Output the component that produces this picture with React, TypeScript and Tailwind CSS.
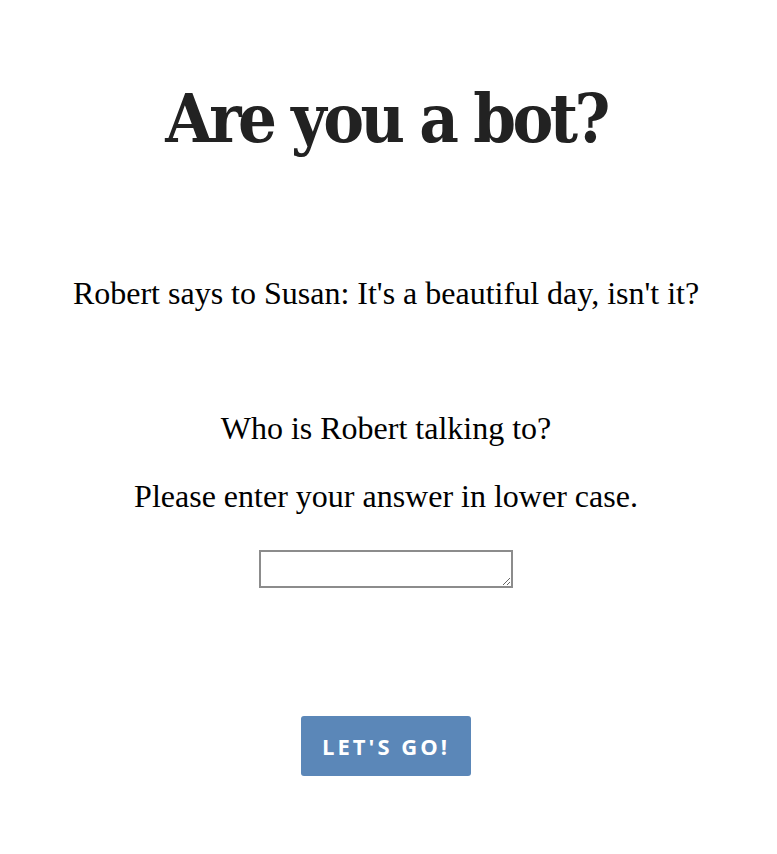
export default function App() {
  return (
    <div className="min-h-[854px] w-full bg-white flex flex-col items-center text-black pr-[5px]" style={{ fontFamily: '"Liberation Serif", serif' }}>
      <h1 className="mt-[76px] text-[68px] leading-[84px] font-bold text-[#222] tracking-[-3.5px]" style={{ fontFamily: '"DejaVu Serif Condensed", "DejaVu Serif", serif', fontStretch: 'condensed' }}>
        Are you a bot?
      </h1>
      <p className="mt-[115px] text-[32px] leading-[36px]">Robert says to Susan: It's a beautiful day, isn't it?</p>
      <p className="mt-[99px] text-[32px] leading-[36px]">Who is Robert talking to?</p>
      <p className="mt-[32px] text-[32px] leading-[36px]">Please enter your answer in lower case.</p>
      <textarea className="mt-[36px] w-[254px] h-[38px] border-2 border-[#8c8c8c] bg-white resize-y" />
      <button className="mt-[128px] w-[170px] h-[60px] rounded-[3px] bg-[#5b87b8] text-white font-bold text-[22px] tracking-[3px]" style={{ fontFamily: '"Open Sans", sans-serif' }}>
        LET'S GO!
      </button>
    </div>
  );
}
